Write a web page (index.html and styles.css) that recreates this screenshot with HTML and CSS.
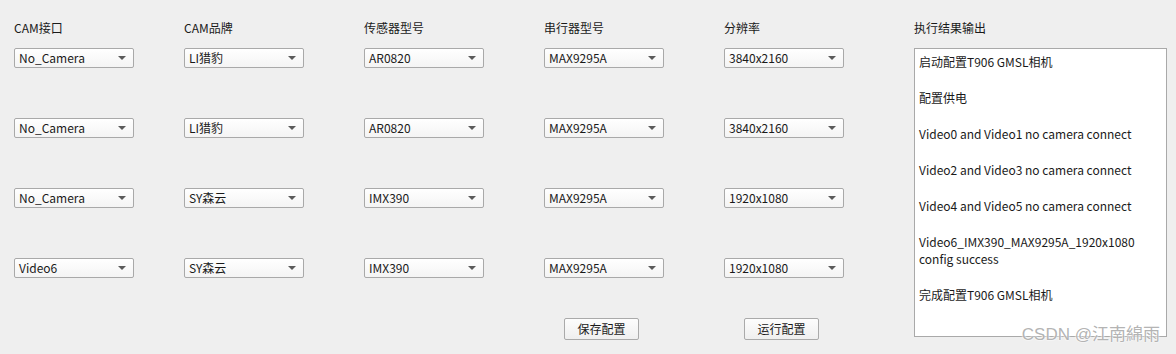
FILE: index.html
```html
<!DOCTYPE html>
<html lang="zh">
<head>
<meta charset="utf-8">
<title>CAM 配置</title>
<link rel="stylesheet" href="styles.css">
</head>
<body>
<div class="app">
  <div class="config">
    <div class="label">CAM接口</div>
    <div class="label">CAM品牌</div>
    <div class="label">传感器型号</div>
    <div class="label">串行器型号</div>
    <div class="label">分辨率</div>

    <div class="combo"><span>No_Camera</span><i class="arrow"></i></div>
    <div class="combo"><span>LI猎豹</span><i class="arrow"></i></div>
    <div class="combo"><span>AR0820</span><i class="arrow"></i></div>
    <div class="combo"><span>MAX9295A</span><i class="arrow"></i></div>
    <div class="combo"><span>3840x2160</span><i class="arrow"></i></div>

    <div class="combo"><span>No_Camera</span><i class="arrow"></i></div>
    <div class="combo"><span>LI猎豹</span><i class="arrow"></i></div>
    <div class="combo"><span>AR0820</span><i class="arrow"></i></div>
    <div class="combo"><span>MAX9295A</span><i class="arrow"></i></div>
    <div class="combo"><span>3840x2160</span><i class="arrow"></i></div>

    <div class="combo"><span>No_Camera</span><i class="arrow"></i></div>
    <div class="combo"><span>SY森云</span><i class="arrow"></i></div>
    <div class="combo"><span>IMX390</span><i class="arrow"></i></div>
    <div class="combo"><span>MAX9295A</span><i class="arrow"></i></div>
    <div class="combo"><span>1920x1080</span><i class="arrow"></i></div>

    <div class="combo"><span>Video6</span><i class="arrow"></i></div>
    <div class="combo"><span>SY森云</span><i class="arrow"></i></div>
    <div class="combo"><span>IMX390</span><i class="arrow"></i></div>
    <div class="combo"><span>MAX9295A</span><i class="arrow"></i></div>
    <div class="combo"><span>1920x1080</span><i class="arrow"></i></div>

    <div class="btn-cell save"><button class="btn">保存配置</button></div>
    <div class="btn-cell run"><button class="btn">运行配置</button></div>
  </div>

  <div class="output-col">
    <div class="label">执行结果输出</div>
    <div class="output">
      <p>启动配置T906 GMSL相机</p>
      <p>配置供电</p>
      <p>Video0 and Video1 no camera connect</p>
      <p>Video2 and Video3 no camera connect</p>
      <p>Video4 and Video5 no camera connect</p>
      <p>Video6_IMX390_MAX9295A_1920x1080<br>config success</p>
      <p>完成配置T906 GMSL相机</p>
    </div>
  </div>

  <div class="watermark">CSDN @江南綿雨</div>
</div>
</body>
</html>
```

FILE: styles.css
```css
html, body {
  margin: 0;
  padding: 0;
}

body {
  background: #efefef;
  font-family: "Noto Sans CJK SC", "Noto Sans", sans-serif;
  font-size: 12px;
  color: #1a1a1a;
  width: 1176px;
  height: 354px;
  overflow: hidden;
}

.app {
  position: relative;
  display: flex;
  padding-left: 14px;
  height: 354px;
  box-sizing: border-box;
}

.config {
  display: grid;
  grid-template-columns: 170px 180px 180px 180px 190px;
  grid-template-rows: 48px 70px 70px 70px 60px 22px;
  align-items: start;
}

.label {
  line-height: 16px;
  margin-top: 20px;
  white-space: nowrap;
}

.combo {
  width: 120px;
  height: 20px;
  box-sizing: border-box;
  border: 1px solid #a9a9a9;
  border-radius: 2px;
  background: linear-gradient(#ffffff, #f4f4f4);
  display: flex;
  align-items: center;
  justify-content: space-between;
  padding: 0 7px 0 4px;
  line-height: 18px;
}

.combo span {
  white-space: nowrap;
}

.arrow {
  width: 0;
  height: 0;
  border-left: 4px solid transparent;
  border-right: 4px solid transparent;
  border-top: 4px solid #5a5a5a;
}

.btn-cell.save {
  grid-column: 4;
  grid-row: 6;
  padding-left: 20px;
}

.btn-cell.run {
  grid-column: 5;
  grid-row: 6;
  padding-left: 20px;
}

.btn {
  width: 75px;
  height: 22px;
  box-sizing: border-box;
  border: 1px solid #aaaaaa;
  border-radius: 2px;
  background: linear-gradient(#fdfdfd, #efefef);
  font-family: "Noto Sans CJK SC", "Noto Sans", sans-serif;
  font-size: 12px;
  color: #1a1a1a;
  padding: 0;
  line-height: 20px;
}

.output-col {
  display: flex;
  flex-direction: column;
}

.output-col .label {
  margin-bottom: 12px;
}

.output {
  width: 253px;
  height: 289px;
  box-sizing: border-box;
  border: 1px solid #a9a9a9;
  background: #ffffff;
  padding: 4px 4px 0 4px;
}

.output p {
  margin: 0 0 19px 0;
  line-height: 17px;
}

.watermark {
  position: absolute;
  right: 16px;
  bottom: 9px;
  font-family: "Liberation Sans", "Noto Sans CJK SC", sans-serif;
  font-size: 17px;
  color: rgba(160, 160, 160, 0.8);
  text-shadow: 0 0 2px #ffffff, 0 0 2px #ffffff;
  white-space: nowrap;
}
```
